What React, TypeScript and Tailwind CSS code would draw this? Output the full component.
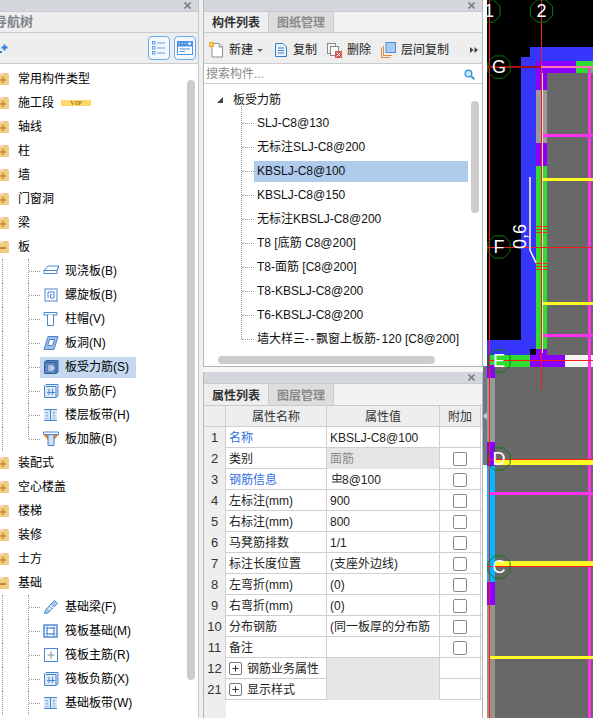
import React from "react";

const FONT = "[font-family:'Liberation_Sans','Noto_Sans_CJK_SC',sans-serif]";

function Closer() {
  return (
    <svg width="7" height="7" viewBox="0 0 7 7" className="block">
      <path d="M0.5 0.5L6.5 6.5M6.5 0.5L0.5 6.5" stroke="#7d8186" strokeWidth="1.6" />
    </svg>
  );
}

function PanelHeader({ height = "h-[11px]" }: { height?: string }) {
  return (
    <div className={`${height} shrink-0 bg-[#d3d6db] flex items-center justify-end pr-[7px]`}>
      <Closer />
    </div>
  );
}

function Folder({ open }: { open?: boolean }) {
  return (
    <svg width="10" height="14" viewBox="0 0 10 14" className="block shrink-0">
      <path d="M0 3H3L4 1H8L9 3V13H0Z" fill="#f0cc85" />
      <path d="M0 2H7" stroke="#e5bd72" strokeWidth="1" />
      {open ? (
        <path d="M0 8H6" stroke="#bb8a33" strokeWidth="2" />
      ) : (
        <path d="M0 8H6M3 5V11" stroke="#c9983e" strokeWidth="2" />
      )}
    </svg>
  );
}

function ChildIcon({ kind }: { kind: string }) {
  const s = "#4a86d0";
  const inner: Record<string, React.ReactNode> = {
    cast: (
      <>
        <path d="M1 7.5L5 3H16L14 7.5V10.5H1Z" fill="#fff" stroke={s} />
        <path d="M1 7.5H14L16 3" fill="none" stroke={s} />
      </>
    ),
    spiral: (
      <>
        <rect x="2" y="2" width="12" height="12" fill="#fff" stroke={s} />
        <path d="M5 11V5H11V11H7.5V7.5H9" fill="none" stroke={s} />
      </>
    ),
    cap: (
      <>
        <path d="M1 1.5H14V4H1Z" fill="#fff" stroke={s} />
        <path d="M4.5 4V14.5H10.5V4" fill="#fff" stroke={s} />
      </>
    ),
    hole: (
      <>
        <path d="M5 1.5H15L11 14.5H1Z" fill="#9bbde6" stroke={s} />
        <path d="M6.5 4.5H11.5L9.5 10.5H4.8Z" fill="#fff" stroke={s} />
      </>
    ),
    rebar: (
      <>
        <path d="M3 1.5H15V13L13 14.5H1.5V3Z" fill="#5f86bd" stroke="#2f5f9e" />
        <path d="M3 3.5H13V14" fill="none" stroke="#2f5f9e" />
        <path d="M5 7H10V11H5M5 9H12M8 6V12" fill="none" stroke="#dbe6f5" />
      </>
    ),
    neg: (
      <>
        <path d="M3 1.5H15V13L13 14.5H1.5V3Z" fill="#dbe8f8" stroke={s} />
        <path d="M3 3.5H13V14" fill="none" stroke={s} />
        <path d="M6 6V12M9.5 6V12M4 9.5H12" fill="none" stroke={s} />
      </>
    ),
    band: (
      <>
        <rect x="1" y="2.5" width="13" height="11" fill="#d5e5f7" />
        <path d="M1 2.5H14M1 13.5H14M7.5 2.5V13.5" stroke={s} fill="none" />
        <path d="M4 5V12M11 5V12" stroke={s} strokeDasharray="1.5 1.5" fill="none" />
      </>
    ),
    haunch: (
      <>
        <path d="M0.5 1H15.5V3.5H0.5Z" fill="#fff" stroke={s} />
        <path d="M0.5 4L5 9V4ZM15.5 4L11 9V4Z" fill="#f0821e" />
        <path d="M5 4V14.5H11V4" fill="#cfe0f4" stroke={s} />
      </>
    ),
    beam: (
      <>
        <path d="M2.5 11L11.5 1.5L14.5 4.5L5 14L1.5 14.5Z" fill="#a9c8ee" stroke={s} />
        <path d="M5 9L10 12M7 6.5L11.5 9.5" stroke="#fff" />
      </>
    ),
    raft: (
      <>
        <rect x="1" y="2" width="13" height="12" fill="#fff" stroke={s} strokeWidth="1.4" />
        <rect x="4" y="5" width="7" height="6" fill="#fff" stroke={s} />
        <path d="M1 5H14M1 11H14M4 2V14M11 2V14" stroke={s} strokeDasharray="1.5 1" />
      </>
    ),
    main: (
      <>
        <rect x="1.5" y="1.5" width="13" height="13" fill="#fff" stroke={s} />
        <path d="M8 4V12M4.5 8H11.5" stroke="#8a8f96" />
      </>
    ),
  };
  return (
    <svg width="16" height="16" viewBox="0 0 16 16" className="block shrink-0">
      {inner[kind]}
    </svg>
  );
}

type NavItem = { t: string; open?: boolean; vip?: boolean; icon?: string; sel?: boolean };
const nav: NavItem[] = [
  { t: "常用构件类型" },
  { t: "施工段", vip: true },
  { t: "轴线" },
  { t: "柱" },
  { t: "墙" },
  { t: "门窗洞" },
  { t: "梁" },
  { t: "板", open: true },
  { t: "现浇板(B)", icon: "cast" },
  { t: "螺旋板(B)", icon: "spiral" },
  { t: "柱帽(V)", icon: "cap" },
  { t: "板洞(N)", icon: "hole" },
  { t: "板受力筋(S)", icon: "rebar", sel: true },
  { t: "板负筋(F)", icon: "neg" },
  { t: "楼层板带(H)", icon: "band" },
  { t: "板加腋(B)", icon: "haunch" },
  { t: "装配式" },
  { t: "空心楼盖" },
  { t: "楼梯" },
  { t: "装修" },
  { t: "土方" },
  { t: "基础", open: true },
  { t: "基础梁(F)", icon: "beam" },
  { t: "筏板基础(M)", icon: "raft" },
  { t: "筏板主筋(R)", icon: "main" },
  { t: "筏板负筋(X)", icon: "neg" },
  { t: "基础板带(W)", icon: "band" },
];

function NavRow({ item, last }: { item: NavItem; last?: boolean }) {
  if (item.icon) {
    return (
      <div className="relative h-[24px] flex items-center text-[12px] text-black">
        <div className="absolute left-[2px] top-0 bottom-0 border-l border-dotted border-[#999]" />
        <div className={`absolute left-[28px] top-0 border-l border-dotted border-[#999] ${last ? "h-[12px]" : "bottom-0"}`} />
        <div className="ml-[29px] w-[11px] border-t border-dotted border-[#999]" />
        <div className={`h-[21px] flex items-center pl-[3px] pr-[7px] gap-[6px] ${item.sel ? "bg-[#c5d8f0]" : ""}`}>
          <ChildIcon kind={item.icon} />
          <span className="whitespace-nowrap">{item.t}</span>
        </div>
      </div>
    );
  }
  return (
    <div className="h-[24px] flex items-center text-[12px] text-black">
      <Folder open={item.open} />
      <span className="ml-[8px] whitespace-nowrap">{item.t}</span>
      {item.vip && (
        <span className="ml-[7px] w-[30px] h-[6px] bg-[#fdd968] text-[#a8801e] text-[7px] leading-[6px] text-center [font-family:'Liberation_Serif',serif] font-bold">
          VIP
        </span>
      )}
    </div>
  );
}

function NavPanel() {
  return (
    <div className="w-[199px] shrink-0 h-full flex flex-col border-r border-[#c4c6c9] bg-white relative overflow-hidden">
      <PanelHeader height="h-[11px]" />
      <div className="h-[22px] shrink-0 bg-[#eeeeee] border-y border-[#c8cacd] flex items-center">
        <span className="ml-[-6px] text-[13px] font-bold text-[#7f858c]">导航树</span>
      </div>
      <div className="h-[31px] shrink-0 bg-[#eeeeee] border-b border-[#c8cacd] flex items-center justify-between pr-[2px]">
        <svg width="9" height="9" viewBox="0 0 9 9" className="block">
          <path d="M4.5 0.5V6.5M1.5 3.5H7.5" stroke="#2f7fd8" strokeWidth="2" />
          <rect x="0" y="7" width="2" height="2" fill="#2f7fd8" />
        </svg>
        <div className="flex gap-[4px]">
          <div className="w-[22px] h-[24px] rounded-[4px] border border-[#67a9ee] bg-[#f4f8fd] flex items-center justify-center">
            <svg width="14" height="14" viewBox="0 0 14 14">
              <path d="M5 2H13M5 7H13M5 12H13" stroke="#5e9fe5" />
              <rect x="0.5" y="0.5" width="2.5" height="2.5" fill="none" stroke="#5e9fe5" />
              <rect x="0.5" y="5.5" width="2.5" height="2.5" fill="none" stroke="#5e9fe5" />
              <rect x="0.5" y="10.5" width="2.5" height="2.5" fill="none" stroke="#5e9fe5" />
            </svg>
          </div>
          <div className="w-[22px] h-[24px] rounded-[4px] border border-[#67a9ee] bg-[#f4f8fd] flex items-center justify-center">
            <svg width="16" height="14" viewBox="0 0 16 14">
              <rect x="0.5" y="0.5" width="15" height="13" fill="#fff" stroke="#4a94e3" />
              <rect x="0.5" y="0.5" width="15" height="5" fill="#4a94e3" />
              <path d="M2 2.5H3M5 2.5H6M8 2.5H9M11 2L14 2L12.5 4Z" stroke="#fff" fill="#fff" strokeWidth="0.8" />
              <path d="M2.5 8H13M2.5 10.5H8" stroke="#4a94e3" />
            </svg>
          </div>
        </div>
      </div>
      <div className="flex-1 min-h-0 pt-[3px]">
        {nav.map((n, i) => (
          <NavRow key={i} item={n} last={n.t === "板加腋(B)"} />
        ))}
      </div>
      <div className="absolute left-[187px] top-[80px] w-[8px] h-[600px] rounded-[4px] bg-[#cccccc]" />
    </div>
  );
}

function Tab({ active, children }: { active?: boolean; children: React.ReactNode }) {
  return (
    <div
      className={`h-full w-[65px] flex items-center justify-center pt-[2px] text-[12px] font-bold border-r border-[#c8cacd] ${
        active ? "bg-[#eeeeee] text-[#333]" : "bg-[#dddddd] text-[#8a8a8a]"
      }`}
    >
      {children}
    </div>
  );
}

function Tool({ icon, label }: { icon: React.ReactNode; label: string }) {
  return (
    <div className="flex items-center gap-[5px] text-[12px] text-[#222]">
      {icon}
      <span className="whitespace-nowrap">{label}</span>
    </div>
  );
}

const IconNew = (
  <svg width="15" height="16" viewBox="0 0 15 16" className="block">
    <path d="M3 1.5H10L13.5 5V15H3Z" fill="#fff" stroke="#8f8f8f" />
    <path d="M10 1.5V5H13.5" fill="none" stroke="#8f8f8f" />
    <rect x="0" y="0" width="5" height="5" fill="#f5a623" />
    <rect x="1.5" y="1.5" width="2" height="2" fill="#fff3c9" />
  </svg>
);
const IconCopy = (
  <svg width="14" height="16" viewBox="0 0 14 16" className="block">
    <path d="M1.5 1.5H9L12.5 5V14.5H1.5Z" fill="#eaf2fb" stroke="#3b7fc6" />
    <path d="M4 6H10M4 8.5H10M4 11H10" stroke="#3b7fc6" />
  </svg>
);
const IconDelete = (
  <svg width="15" height="16" viewBox="0 0 15 16" className="block">
    <rect x="0.5" y="1.5" width="8" height="10" fill="#f5f5f5" stroke="#888" />
    <rect x="3.5" y="4.5" width="8" height="9" fill="#fff" stroke="#888" />
    <rect x="8" y="9" width="7" height="7" fill="#d9534f" />
    <path d="M9.5 10.5L13.5 14.5M13.5 10.5L9.5 14.5" stroke="#fff" />
  </svg>
);
const IconFloor = (
  <svg width="15" height="16" viewBox="0 0 15 16" className="block">
    <path d="M0.5 15.5V5.5M0.5 15.5H9" stroke="#e08a3c" fill="none" />
    <path d="M2.5 13.5V4M2.5 13.5H11" stroke="#e08a3c" fill="none" />
    <rect x="5" y="0.5" width="9.5" height="10" fill="#a9ccf2" stroke="#4a90d9" />
  </svg>
);

function ListPanel() {
  const items: React.ReactNode[] = [
    "SLJ-C8@130",
    "无标注SLJ-C8@200",
    "KBSLJ-C8@100",
    "KBSLJ-C8@150",
    "无标注KBSLJ-C8@200",
    "T8 [底筋 C8@200]",
    "T8-面筋 [C8@200]",
    "T8-KBSLJ-C8@200",
    "T6-KBSLJ-C8@200",
    <span key="w">
      墙大样三<span className="tracking-[1.5px]">--</span>飘窗上板筋<span className="tracking-[1.5px]">-</span>120 [C8@200]
    </span>,
  ];
  return (
    <div className="h-[367px] shrink-0 flex flex-col border-x border-b border-[#b5b5b5] bg-white relative overflow-hidden">
      <PanelHeader />
      <div className="h-[22px] shrink-0 bg-[#f2f2f2] border-y border-[#c8cacd] flex">
        <Tab active>构件列表</Tab>
        <Tab>图纸管理</Tab>
      </div>
      <div className="h-[31px] shrink-0 bg-[#eeeeee] border-b border-[#c8cacd] flex items-center pl-[5px] pt-[4px] relative">
        <Tool icon={IconNew} label="新建" />
        <svg width="6" height="3" viewBox="0 0 6 3" className="ml-[4px]">
          <path d="M0 0H6L3 3Z" fill="#666" />
        </svg>
        <div className="ml-[11px]">
          <Tool icon={IconCopy} label="复制" />
        </div>
        <div className="ml-[10px]">
          <Tool icon={IconDelete} label="删除" />
        </div>
        <div className="ml-[10px]">
          <Tool icon={IconFloor} label="层间复制" />
        </div>
        <svg width="8" height="6" viewBox="0 0 8 6" className="ml-auto mr-[4px]">
          <path d="M0 0L3.5 3L0 6ZM4.5 0L8 3L4.5 6Z" fill="#444" />
        </svg>
      </div>
      <div className="h-[20px] shrink-0 bg-white border-b border-[#c8cacd] flex items-center justify-between pl-[2px] pr-[7px] pt-[1px]">
        <span className="text-[12px] text-[#8a8a8a]">搜索构件...</span>
        <svg width="11" height="11" viewBox="0 0 11 11">
          <circle cx="4.5" cy="4.5" r="3.3" fill="#d4e9f7" stroke="#3a9ad9" strokeWidth="1.5" />
          <path d="M7 7L10.3 10.3" stroke="#3a9ad9" strokeWidth="2" />
        </svg>
      </div>
      <div className="flex-1 min-h-0 relative pt-[4px]">
        <div className="h-[23px] flex items-center text-[12px] text-[#111]">
          <svg width="6" height="6" viewBox="0 0 6 6" className="ml-[13px]">
            <path d="M6 0V6H0Z" fill="#444" />
          </svg>
          <span className="ml-[10px]">板受力筋</span>
        </div>
        <div className="relative">
          <div className="absolute left-[37px] top-[-10px] h-[238px] border-l border-dotted border-[#999]" />
          {items.map((t, i) => (
            <div key={i} className="h-[24px] flex items-center text-[12px] text-[#111]">
              <div className="ml-[38px] w-[12px] border-t border-dotted border-[#999]" />
              <div className={`h-[21px] w-[214px] flex items-center pl-[3px] whitespace-nowrap ${i === 2 ? "bg-[#aecbeb]" : ""}`}>
                {t}
              </div>
            </div>
          ))}
        </div>
        <div className="absolute left-[267px] top-[17px] w-[8px] h-[112px] rounded-[4px] bg-[#cccccc]" />
        <div className="absolute left-[14px] top-[272px] h-[8px] w-[217px] rounded-[4px] bg-[#cccccc]" />
      </div>
    </div>
  );
}

function Check() {
  return <div className="mx-auto w-[14px] h-[14px] rounded-[2px] border border-[#8a8a8a] bg-white" />;
}

type Row = { n: number; name: string; val: string; blue?: boolean; grey?: boolean; check?: boolean; plus?: boolean };
const rows: Row[] = [
  { n: 1, name: "名称", val: "KBSLJ-C8@100", blue: true },
  { n: 2, name: "类别", val: "面筋", grey: true, check: true },
  { n: 3, name: "钢筋信息", val: "", blue: true, check: true },
  { n: 4, name: "左标注(mm)", val: "900", check: true },
  { n: 5, name: "右标注(mm)", val: "800", check: true },
  { n: 6, name: "马凳筋排数", val: "1/1", check: true },
  { n: 7, name: "标注长度位置", val: "(支座外边线)", check: true },
  { n: 8, name: "左弯折(mm)", val: "(0)", check: true },
  { n: 9, name: "右弯折(mm)", val: "(0)", check: true },
  { n: 10, name: "分布钢筋", val: "(同一板厚的分布筋", check: true },
  { n: 11, name: "备注", val: "", check: true },
  { n: 12, name: "钢筋业务属性", val: "", grey: true, plus: true },
  { n: 21, name: "显示样式", val: "", grey: true, plus: true },
];

const cols = "grid grid-cols-[22px_101px_113px_41px]";

function Plus() {
  return (
    <span className="inline-flex w-[13px] h-[13px] border border-[#777] rounded-[2px] items-center justify-center mr-[5px] bg-white shrink-0">
      <svg width="7" height="7" viewBox="0 0 7 7">
        <path d="M3.5 0.5V6.5M0.5 3.5H6.5" stroke="#333" />
      </svg>
    </span>
  );
}

function PropsPanel() {
  return (
    <div className="flex-1 min-h-0 flex flex-col border-x border-[#b5b5b5] bg-white overflow-hidden relative">
      <PanelHeader />
      <div className="h-[23px] shrink-0 bg-[#f2f2f2] border-y border-[#c8cacd] flex">
        <Tab active>属性列表</Tab>
        <Tab>图层管理</Tab>
      </div>
      <div className="absolute left-0 top-[56px] bottom-0 w-[22px] bg-[#eeeeee]" />
      <div className="relative">
        <div className={`${cols} h-[21px] bg-[#eeeeee] border-b border-[#cfcfcf] text-[12px] text-[#333]`}>
          <div className="border-r border-[#cfcfcf]" />
          <div className="border-r border-[#cfcfcf] text-center leading-[22px]">属性名称</div>
          <div className="border-r border-[#cfcfcf] text-center leading-[22px]">属性值</div>
          <div className="border-r border-[#cfcfcf] text-center leading-[22px]">附加</div>
        </div>
        {rows.map((r) => (
          <div key={r.n} className={`${cols} h-[21px] border-b border-[#cfcfcf] text-[12px] text-[#222]`}>
            <div className="bg-[#eeeeee] border-r border-[#cfcfcf] text-center leading-[21px] text-[13px] text-[#333]">{r.n}</div>
            <div className={`border-r border-[#cfcfcf] pl-[3px] flex items-center whitespace-nowrap ${r.blue ? "text-[#2f6fe0]" : ""}`}>
              {r.plus && <Plus />}
              {r.name}
            </div>
            <div className={`border-r border-[#cfcfcf] pl-[3px] flex items-center whitespace-nowrap overflow-hidden ${r.grey ? "bg-[#e6e6e6] text-[#8a8a8a]" : ""}`}>
              {r.n === 3 ? (
                <>
                  <svg width="10" height="10" viewBox="0 0 10 10" className="ml-[2px] mb-[3px]">
                    <path d="M5 0V9M1 2.5V6.5H9V2.5H1M0 9H10" fill="none" stroke="#333" />
                  </svg>
                  <span className="text-[12px]">8@100</span>
                </>
              ) : (
                r.val
              )}
            </div>
            <div className="border-r border-[#cfcfcf] flex items-center">{r.check && <Check />}</div>
          </div>
        ))}
      </div>
    </div>
  );
}

function Hex({ cx, cy, label, ty }: { cx: number; cy: number; label: string; ty?: number }) {
  const r = 12;
  const pts = Array.from({ length: 8 }, (_, i) => {
    const a = (Math.PI * 2 * i) / 8 + Math.PI / 8;
    return `${(cx + r * Math.cos(a)).toFixed(1)},${(cy + r * Math.sin(a)).toFixed(1)}`;
  }).join(" ");
  return (
    <g>
      <polygon points={pts} fill="none" stroke="#0b7a0b" strokeWidth="1" />
      <text x={cx} y={cy + (ty ?? 6)} textAnchor="middle" fontSize="18" fill="#fff" fontFamily="Liberation Sans, sans-serif">
        {label}
      </text>
    </g>
  );
}

function Canvas() {
  const R = (x: number, y: number, w: number, h: number, fill: string) => (
    <rect x={x} y={y} width={w} height={h} fill={fill} />
  );
  const blue = "#3535fb";
  const purple = "#8a00ff";
  const green = "#2fdc2f";
  const gray = "#686868";
  const magenta = "#ff33ee";
  const yellow = "#fffb23";
  return (
    <svg width="106" height="718" viewBox="487 0 106 718" className="block shrink-0 bg-black">
      <rect x="487" y="0" width="106" height="718" fill="#000" />
      <path d="M530 47H593V73H547V349H593V367H487V340H521V57H530Z" fill={blue} />
      {R(547, 73, 46, 282, gray)}
      {R(495, 367, 98, 351, gray)}
      {R(536, 61, 40, 12, purple)}
      {R(576, 61, 17, 12, green)}
      {R(536, 61, 11, 29, purple)}
      {R(536, 90, 11, 53, "#9a9a9a")}
      {R(536, 143, 11, 23, purple)}
      {R(536, 166, 11, 183, green)}
      {R(530, 349, 6, 6, "#000")}
      {R(536, 349, 11, 6, purple)}
      {R(530, 355, 35, 12, purple)}
      {R(565, 355, 28, 12, "#f4f4f4")}
      {R(490, 355, 40, 12, green)}
      {R(487, 365, 8, 13, purple)}
      {R(487, 378, 8, 64, "#999")}
      {R(487, 442, 8, 24, purple)}
      {R(487, 466, 8, 116, "#09b5ff")}
      {R(487, 582, 8, 23, purple)}
      {R(487, 605, 8, 113, "#9a9189")}
      {R(588, 67, 3, 651, magenta)}
      {R(541, 134, 52, 3, magenta)}
      {R(541, 334, 52, 3, magenta)}
      {R(489, 492, 104, 3, magenta)}
      {R(543, 178, 50, 3, yellow)}
      {R(543, 302, 50, 3, yellow)}
      {R(495, 460, 98, 5, yellow)}
      {R(495, 561, 98, 5, yellow)}
      {R(490, 656, 103, 3, yellow)}
      {R(536, 226, 11, 1, "#ff2020")}
      {R(536, 229, 11, 1, "#ff2020")}
      {R(536, 232, 11, 1, "#ff2020")}
      {R(536, 263, 11, 1, "#ff2020")}
      {R(536, 266, 11, 1, "#ff2020")}
      {R(536, 269, 11, 1, "#ff2020")}
      {R(489, 0, 1, 718, "#ff1a1a")}
      {R(541, 0, 1, 390, "#ff1a1a")}
      {R(542, 73, 1, 280, "#ffd0d0")}
      {R(487, 66, 54, 2, "#a80f14")}
      {R(541, 66, 52, 2, "#ff77b5")}
      {R(487, 247, 106, 1, "#ff1a1a")}
      {R(487, 360, 106, 1, "#ff1a1a")}
      {R(487, 459, 106, 1, "#ff1a1a")}
      {R(487, 566, 106, 1, "#ff1a1a")}
      <path d="M530 177V250L536 263" fill="none" stroke="#fff" strokeWidth="1.5" />
      <text x="0" y="0" transform="translate(526 249) rotate(-90)" fontSize="18" fill="#fff" fontFamily="Liberation Sans, sans-serif">
        0,6
      </text>
      <Hex cx={489} cy={11} label="1" />
      <Hex cx={541.5} cy={11} label="2" />
      <Hex cx={499} cy={67} label="G" />
      <Hex cx={499} cy={247} label="F" />
      <Hex cx={499} cy={361} label="E" />
      <Hex cx={499} cy={459} label="D" />
      <Hex cx={499} cy={567} label="C" />
    </svg>
  );
}

export default function App() {
  return (
    <div className={`w-[593px] h-[718px] overflow-hidden flex bg-[#f0f0f0] ${FONT}`}>
      <NavPanel />
      <div className="w-[4px] shrink-0" />
      <div className="w-[280px] shrink-0 h-full flex flex-col">
        <ListPanel />
        <div className="h-[5px] shrink-0 bg-[#f7f7f7]" />
        <PropsPanel />
      </div>
      <div className="w-[4px] shrink-0 flex flex-col bg-white">
        <div className="h-[366px]" />
        <div className="h-[99px] bg-[#6b7986] flex items-center justify-center">
          <svg width="4" height="8" viewBox="0 0 4 8">
            <path d="M4 0V8L0 4Z" fill="#c8ccd0" />
          </svg>
        </div>
      </div>
      <Canvas />
    </div>
  );
}
